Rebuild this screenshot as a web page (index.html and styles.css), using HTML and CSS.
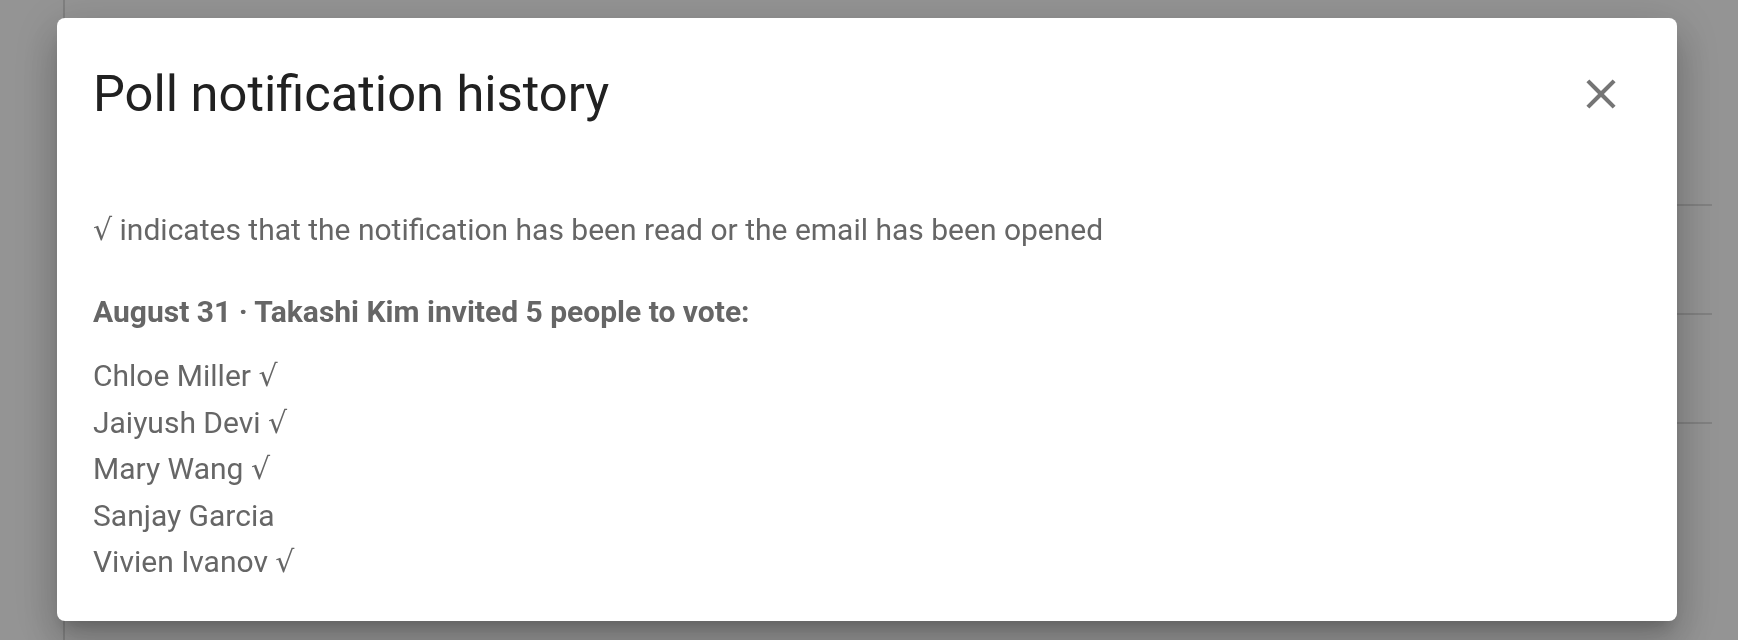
FILE: index.html
```html
<!DOCTYPE html>
<html lang="en">
<head>
<meta charset="utf-8">
<title>Poll notification history</title>
<link rel="stylesheet" href="styles.css">
</head>
<body>
<div class="app">
  <aside class="sidebar"></aside>
  <main class="main">
    <div class="row"></div>
    <div class="row"></div>
    <div class="row"></div>
  </main>
</div>

<div class="overlay">
  <div class="dialog" role="dialog" aria-labelledby="dlg-title">
    <div class="dialog-header">
      <h2 class="dialog-title" id="dlg-title">Poll notification history</h2>
      <button class="close-btn" aria-label="Close">
        <svg class="close-icon" viewBox="0 0 24 24" width="50" height="50"><path d="M19 6.41L17.59 5 12 10.59 6.41 5 5 6.41 10.59 12 5 17.59 6.41 19 12 13.41 17.59 19 19 17.59 13.41 12z"/></svg>
      </button>
    </div>
    <div class="dialog-content">
      <p class="legend"><span class="tick">√</span> indicates that the notification has been read or the email has been opened</p>
      <h3 class="invite">August 31 · Takashi Kim invited 5 people to vote:</h3>
      <ul class="names">
        <li>Chloe Miller <span class="tick">√</span></li>
        <li>Jaiyush Devi <span class="tick">√</span></li>
        <li>Mary Wang <span class="tick">√</span></li>
        <li>Sanjay Garcia</li>
        <li>Vivien Ivanov <span class="tick">√</span></li>
      </ul>
    </div>
  </div>
</div>
</body>
</html>
```

FILE: styles.css
```css
html, body {
  margin: 0;
  padding: 0;
  height: 100%;
  overflow: hidden;
}

body {
  background: #ffffff;
  font-family: Roboto, "Liberation Sans", Arial, sans-serif;
}

.app {
  display: flex;
  height: 640px;
}

.sidebar {
  width: 63px;
  flex: none;
  border-right: 2px solid #dcdcdc;
}

.main {
  flex: 1;
  padding-top: 97px;
  margin-right: 26px;
}

.row {
  height: 107px;
  border-bottom: 2px solid #dedede;
}

.overlay {
  position: fixed;
  inset: 0;
  background: rgba(0, 0, 0, 0.42);
  display: flex;
  align-items: flex-start;
}

.dialog {
  margin: 18px 0 0 57px;
  width: 1620px;
  height: 603px;
  background: #ffffff;
  border-radius: 8px;
  box-shadow: 0 11px 15px -7px rgba(0, 0, 0, 0.2),
              0 24px 38px 3px rgba(0, 0, 0, 0.14),
              0 9px 46px 8px rgba(0, 0, 0, 0.12);
  display: flex;
  flex-direction: column;
  box-sizing: border-box;
}

.dialog-header {
  display: flex;
  align-items: center;
  justify-content: space-between;
  padding: 46px 51px 0 36px;
}

.dialog-title {
  margin: 0;
  font-size: 50.6px;
  line-height: 60px;
  font-weight: 400;
  color: #212121;
}

.close-btn {
  border: 0;
  padding: 0;
  margin: 0;
  background: transparent;
  width: 50px;
  height: 50px;
  display: flex;
  cursor: pointer;
}

.close-icon {
  display: block;
  fill: #757575;
}

.dialog-content {
  padding: 0 36px;
  color: #666666;
  font-size: 30px;
}

.legend {
  margin: 85px 0 0;
  line-height: 42px;
}

.invite {
  margin: 40px 0 0;
  font-size: 30px;
  line-height: 42px;
  font-weight: 700;
}

.names {
  list-style: none;
  margin: 20px 0 0;
  padding: 0;
  line-height: 46.6px;
}

.tick {
  font-family: "DejaVu Sans", sans-serif;
  font-weight: 400;
  line-height: 0;
}
```
